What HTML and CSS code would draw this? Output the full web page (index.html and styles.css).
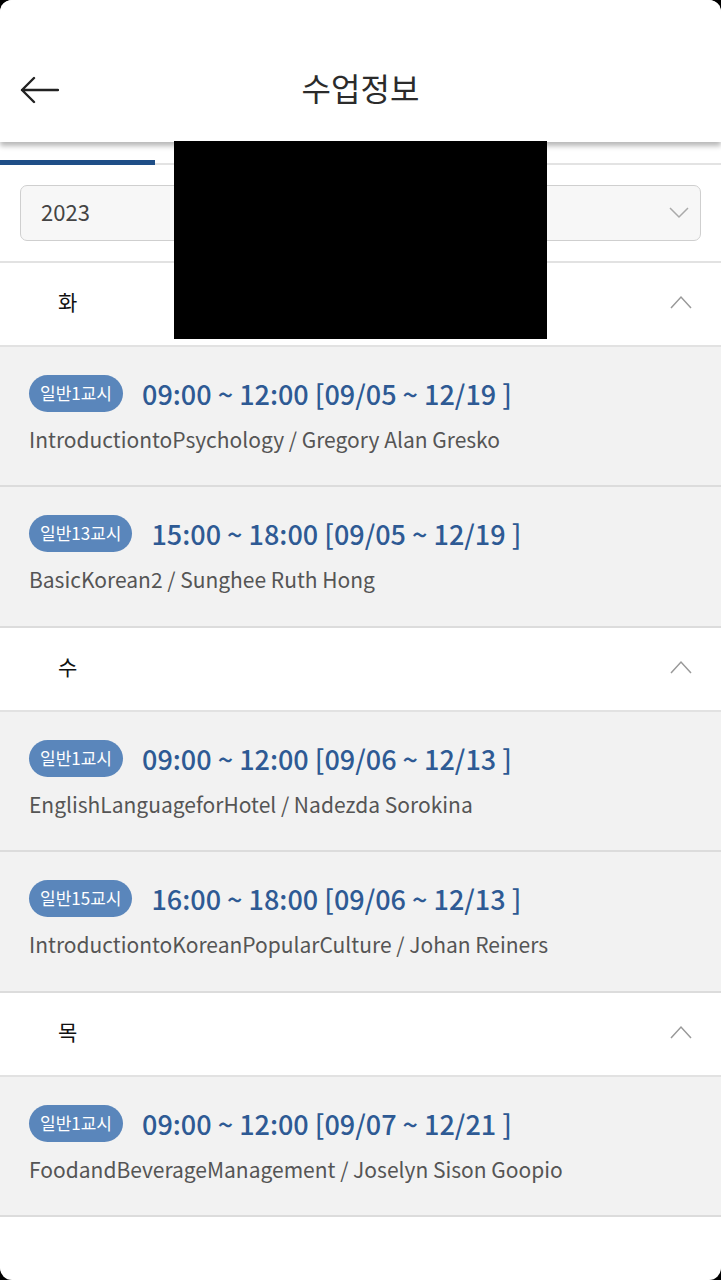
FILE: index.html
```html
<!DOCTYPE html>
<html>

<head>
    <title>수업정보</title>
    <meta charset="utf-8">
    <meta name="viewport" content="width=device-width, initial-scale=1.0">
    <link rel="stylesheet" href="styles.css">
</head>

<body>
    <div class="app">
        <div class="app-header">
            <a class="app-back">
                <svg width="40" height="28" viewBox="0 0 40 28">
                    <path d="M39 14H3M15 2L3 14l12 12" fill="none" stroke="#222" stroke-width="2.4" stroke-linecap="round" stroke-linejoin="round" />
                </svg>
            </a>
            <h1>수업정보</h1>
        </div>
        <div class="app-tabs">
            <span class="app-tab active"></span>
            <span class="app-tab"></span>
        </div>
        <div class="app-filter">
            <div class="app-select">
                <span>2023</span>
                <svg width="20" height="12" viewBox="0 0 20 12">
                    <path d="M1 1l9 9 9-9" fill="none" stroke="#aaa" stroke-width="1.5" />
                </svg>
            </div>
        </div>

        <div class="day">
            <span>화</span>
            <svg width="22" height="14" viewBox="0 0 22 14">
                <path d="M1 13L11 2l10 11" fill="none" stroke="#999" stroke-width="1.5" />
            </svg>
        </div>
        <div class="lesson">
            <div class="lesson-top">
                <span class="badge">일반1교시</span>
                <span class="time">09:00 ~ 12:00 [09/05 ~ 12/19 ]</span>
            </div>
            <p>IntroductiontoPsychology / Gregory Alan Gresko</p>
        </div>
        <div class="lesson">
            <div class="lesson-top">
                <span class="badge">일반13교시</span>
                <span class="time">15:00 ~ 18:00 [09/05 ~ 12/19 ]</span>
            </div>
            <p>BasicKorean2 / Sunghee Ruth Hong</p>
        </div>

        <div class="day">
            <span>수</span>
            <svg width="22" height="14" viewBox="0 0 22 14">
                <path d="M1 13L11 2l10 11" fill="none" stroke="#999" stroke-width="1.5" />
            </svg>
        </div>
        <div class="lesson">
            <div class="lesson-top">
                <span class="badge">일반1교시</span>
                <span class="time">09:00 ~ 12:00 [09/06 ~ 12/13 ]</span>
            </div>
            <p>EnglishLanguageforHotel / Nadezda Sorokina</p>
        </div>
        <div class="lesson">
            <div class="lesson-top">
                <span class="badge">일반15교시</span>
                <span class="time">16:00 ~ 18:00 [09/06 ~ 12/13 ]</span>
            </div>
            <p>IntroductiontoKoreanPopularCulture / Johan Reiners</p>
        </div>

        <div class="day">
            <span>목</span>
            <svg width="22" height="14" viewBox="0 0 22 14">
                <path d="M1 13L11 2l10 11" fill="none" stroke="#999" stroke-width="1.5" />
            </svg>
        </div>
        <div class="lesson">
            <div class="lesson-top">
                <span class="badge">일반1교시</span>
                <span class="time">09:00 ~ 12:00 [09/07 ~ 12/21 ]</span>
            </div>
            <p>FoodandBeverageManagement / Joselyn Sison Goopio</p>
        </div>

        <div class="redact"></div>
    </div>
</body>

</html>
```

FILE: styles.css
```css
html {
    background-color: #000;
}

body {
    margin: 0;
    overflow: hidden;
}

.app {
    position: relative;
    min-height: 1280px;
    background-color: #fff;
    border-radius: 12px;
    overflow: hidden;
    font-family: "Noto Sans CJK KR", "Noto Sans", sans-serif;
}

.app-header {
    position: relative;
    z-index: 1;
    height: 142px;
    display: flex;
    align-items: center;
    justify-content: center;
    padding-top: 32px;
    box-sizing: border-box;
    background-color: #fff;
    box-shadow: 0 4px 5px rgba(0, 0, 0, .28);
}

.app-header h1 {
    margin: 0;
    font-size: 32px;
    font-weight: 400;
    color: #2b2b2b;
}

.app-back {
    position: absolute;
    left: 19px;
    top: 76px;
    display: flex;
}

.app-tabs {
    display: flex;
    height: 21px;
    border-bottom: 2px solid #e3e3e3;
}

.app-tab {
    width: 155px;
}

.app-tab.active {
    margin-top: 15px;
    border-bottom: 5px solid #1f4e87;
    margin-bottom: -2px;
}

.app-filter {
    padding: 20px;
    border-bottom: 2px solid #e2e2e2;
}

.app-select {
    height: 56px;
    box-sizing: border-box;
    border: 1.5px solid #cfcfcf;
    border-radius: 7px;
    background-color: #f7f7f7;
    display: flex;
    align-items: center;
    justify-content: space-between;
    padding: 0 11px 5px 20px;
    font-size: 22px;
    color: #444;
}

.app-select svg {
    margin-top: 5px;
}

.day {
    height: 77px;
    border-bottom: 2px solid #e2e2e2;
    display: flex;
    align-items: center;
    justify-content: space-between;
    padding: 0 29px 5px 58px;
    font-size: 21px;
    color: #111;
}

.day span {
    margin-bottom: 2px;
}

.lesson {
    height: 138px;
    background-color: #f2f2f2;
    border-bottom: 2px solid #dcdcdc;
    padding: 0 29px;
}

.lesson+.lesson {
    height: 139px;
}

.lesson-top {
    display: flex;
    align-items: center;
    height: 37px;
    padding-top: 28px;
}

.badge {
    height: 37px;
    line-height: 36px;
    padding: 0 11px;
    border-radius: 19px;
    background-color: #5a86bb;
    color: #fff;
    font-size: 17px;
}

.time {
    margin-left: 19px;
    font-size: 27px;
    line-height: 37px;
    font-weight: 500;
    color: #2e5a94;
}

.lesson p {
    margin: 13px 0 0;
    font-size: 21px;
    line-height: 28px;
    color: #555;
}

.redact {
    position: absolute;
    left: 174px;
    top: 141px;
    width: 373px;
    height: 198px;
    z-index: 2;
    background-color: #000;
}
```
